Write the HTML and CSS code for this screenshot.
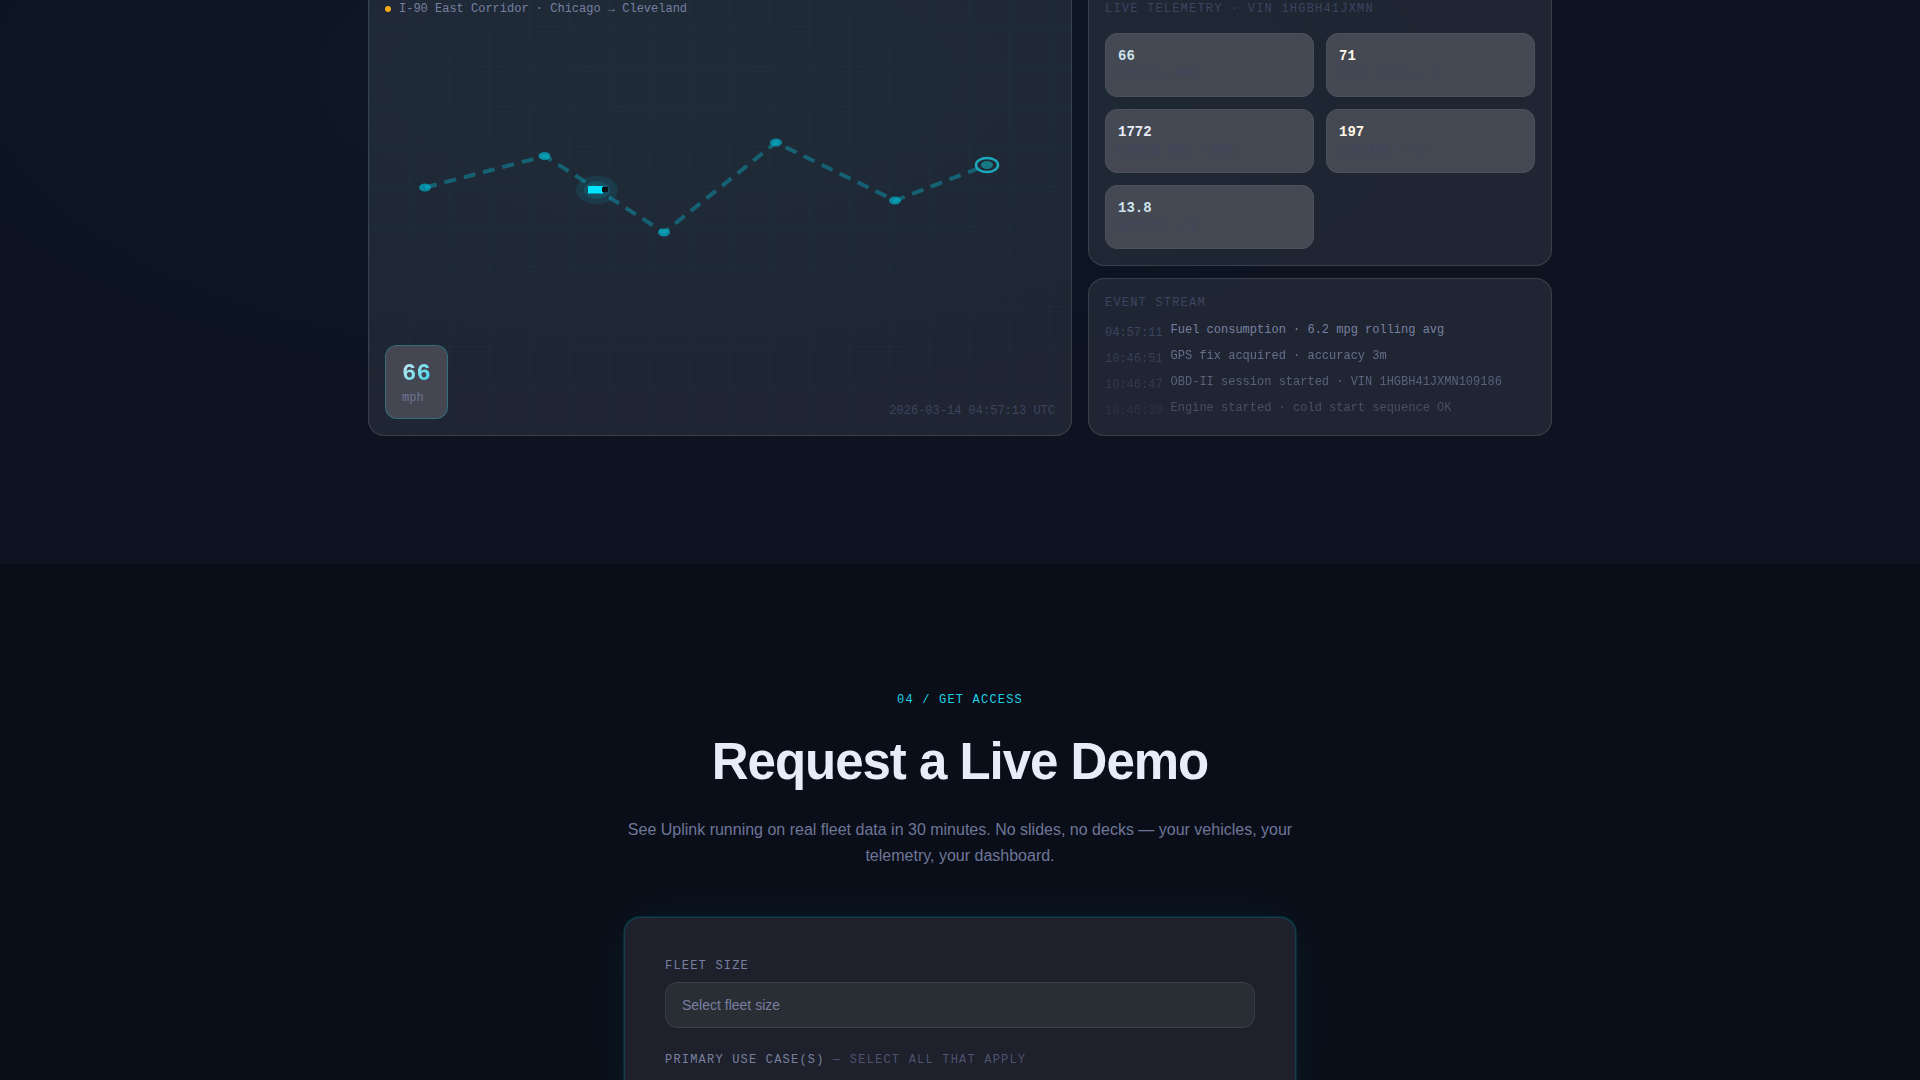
FILE: index.html
```
<!DOCTYPE html>
<html lang="en">
<head>
    <meta charset="UTF-8">
    <meta name="viewport" content="width=device-width, initial-scale=1.0">
    <title>Uplink - Live Fleet Telemetry</title>
    <link rel="stylesheet" href="styles.css">
</head>
<body>

    <section class="live">
        <div class="live-grid">
            <div class="map">
                <svg class="map-route" viewBox="0 0 702 435" preserveAspectRatio="none" aria-hidden="true">
                    <polyline points="56,187.5 176,156 295,232.5 407,142.5 526,200.5 618,165" fill="none" stroke="#00e5ff" stroke-opacity="0.3" stroke-width="4" stroke-dasharray="12 8"/>
                    <g fill="#00bcd4" fill-opacity="0.65">
                        <ellipse cx="56" cy="187.5" rx="6" ry="4"/>
                        <ellipse cx="175.5" cy="156" rx="6" ry="4"/>
                        <ellipse cx="295" cy="232.5" rx="6" ry="4"/>
                        <ellipse cx="407" cy="142.5" rx="6" ry="4"/>
                        <ellipse cx="526" cy="200.5" rx="6" ry="4"/>
                    </g>
                    <!-- destination -->
                    <ellipse cx="618" cy="165" rx="11" ry="7" fill="#212935" stroke="#1ba8bd" stroke-width="2.5"/>
                    <ellipse cx="618" cy="165" rx="6" ry="4" fill="#187986"/>
                    <!-- truck -->
                    <ellipse cx="228" cy="190" rx="21" ry="14" fill="#00e5ff" fill-opacity="0.1"/>
                    <ellipse cx="228" cy="190" rx="13" ry="9" fill="#00e5ff" fill-opacity="0.12"/>
                    <rect x="219" y="186" width="15" height="7.5" fill="#00e5ff"/>
                    <rect x="233" y="187" width="6" height="5" rx="1" fill="#060c14"/>
                </svg>
                <div class="map-header">
                    <span class="dot"></span>
                    <span>I-90 East Corridor · Chicago → Cleveland</span>
                </div>
                <div class="map-footer">
                    <div class="speed">
                        <div class="speed-value">66</div>
                        <div class="speed-unit">mph</div>
                    </div>
                    <time class="timestamp">2026-03-14 04:57:13 UTC</time>
                </div>
            </div>

            <div class="side">
                <div class="panel panel-telemetry">
                    <h3 class="panel-title">Live Telemetry · VIN 1HGBH41JXMN</h3>
                    <div class="metrics">
                        <div class="metric cyan">
                            <div class="metric-value">66</div>
                            <div class="metric-label">SPEED · MPH</div>
                        </div>
                        <div class="metric amber">
                            <div class="metric-value">71</div>
                            <div class="metric-label">FUEL LEVEL · %</div>
                        </div>
                        <div class="metric">
                            <div class="metric-value">1772</div>
                            <div class="metric-label">ENGINE RPM · RPM</div>
                        </div>
                        <div class="metric amber">
                            <div class="metric-value">197</div>
                            <div class="metric-label">COOLANT · °F</div>
                        </div>
                        <div class="metric cyan">
                            <div class="metric-value">13.8</div>
                            <div class="metric-label">BATTERY · V</div>
                        </div>
                    </div>
                </div>

                <div class="panel panel-events">
                    <h3 class="panel-title">Event Stream</h3>
                    <ul class="events">
                        <li><time>04:57:11</time><span>Fuel consumption · 6.2 mpg rolling avg</span></li>
                        <li><time>10:46:51</time><span>GPS fix acquired · accuracy 3m</span></li>
                        <li><time>10:46:47</time><span>OBD-II session started · VIN 1HGBH41JXMN109186</span></li>
                        <li><time>10:46:39</time><span>Engine started · cold start sequence OK</span></li>
                    </ul>
                </div>
            </div>
        </div>
    </section>

    <section class="demo">
        <p class="eyebrow">04 / GET ACCESS</p>
        <h2>Request a Live Demo</h2>
        <p class="lead">See Uplink running on real fleet data in 30 minutes. No slides, no decks — your vehicles, your telemetry, your dashboard.</p>

        <form class="demo-form">
            <div class="field">
                <label for="fleetSize">Fleet Size</label>
                <select id="fleetSize">
                    <option>Select fleet size</option>
                    <option>1-50 vehicles</option>
                    <option>51-250 vehicles</option>
                    <option>251+ vehicles</option>
                </select>
            </div>
            <fieldset class="field">
                <legend>Primary Use Case(s) <span class="hint">— select all that apply</span></legend>
            </fieldset>
        </form>
    </section>

</body>
</html>
```
FILE: styles.css
```
* {
    box-sizing: border-box;
    margin: 0;
    padding: 0;
}
body {
    height: 100vh;
    overflow: hidden;
    background: #0a0e18;
    color: #e8ecf8;
    font-family: "Liberation Sans", Arial, sans-serif;
}

/* live tracking */
.live {
    padding: 0 48px 128px;
    background: radial-gradient(ellipse 1000px 420px at 35% 80px, rgba(0, 200, 255, 0.035), transparent 80%), #0d1321;
}
.live-grid {
    display: grid;
    grid-template-columns: 44fr 29fr;
    gap: 16px;
    max-width: 1184px;
    margin: 0 auto;
    font-family: "Liberation Mono", "Courier New", monospace;
    font-size: 12px;
    line-height: 18px;
}
.map,
.panel {
    background-color: rgba(255, 255, 255, 0.08);
    border: 1px solid rgba(255, 255, 255, 0.12);
    border-radius: 16px;
}
.map {
    position: relative;
    display: flex;
    flex-direction: column;
    justify-content: space-between;
    padding: 0 16px 16px;
    border-top: none;
    border-radius: 0 0 16px 16px;
    background-image:
        linear-gradient(rgba(0, 229, 255, 0.03) 1px, transparent 1px),
        linear-gradient(90deg, rgba(0, 229, 255, 0.03) 1px, transparent 1px);
    background-size: 40px 40px;
    background-position: 0 26px;
}
.map-route {
    position: absolute;
    inset: 0;
    width: 100%;
    height: 100%;
}
.map-header {
    display: flex;
    align-items: center;
    gap: 8px;
    color: #7880a0;
}
.dot {
    width: 6px;
    height: 6px;
    border-radius: 50%;
    background: #f5ab18;
}
.map-footer {
    display: flex;
    justify-content: space-between;
    align-items: flex-end;
}
.speed {
    position: relative;
    padding: 12px 16px;
    background: #444752;
    border: 1px solid rgba(0, 229, 255, 0.25);
    border-radius: 12px;
}
.speed-value {
    font-size: 24px;
    font-weight: bold;
    line-height: 32px;
    color: transparent;
    background: linear-gradient(135deg, #d5eaf0, #22d3ee);
    -webkit-background-clip: text;
    background-clip: text;
}
.speed-unit {
    line-height: 16px;
    color: #6c7492;
}
.timestamp {
    line-height: 16px;
    color: #3d4460;
}

/* telemetry and events */
.side {
    display: flex;
    flex-direction: column;
    gap: 12px;
}
.panel {
    padding: 16px;
}
.panel-title {
    font-size: 12px;
    font-weight: normal;
    letter-spacing: 0.1em;
    text-transform: uppercase;
    color: #3d4460;
}
.panel-telemetry {
    padding-top: 0;
    border-top: none;
    border-radius: 0 0 16px 16px;
}
.panel-telemetry .panel-title {
    margin-bottom: 15px;
    line-height: 18px;
}
.metrics {
    display: grid;
    grid-template-columns: 1fr 1fr;
    gap: 12px;
}
.metric {
    padding: 12px;
    background: #444852;
    border: 1px solid #4d515b;
    border-radius: 12px;
}
.metric-value {
    font-size: 14px;
    font-weight: bold;
    line-height: 20px;
    color: #e8ecf8;
}
.metric-label {
    line-height: 18px;
    color: #3f465c;
}
.cyan .metric-value {
    color: #cbe3ea;
}
.amber .metric-value {
    color: #fff7e8;
}
.panel-events {
    padding-bottom: 15px;
}
.panel-events .panel-title {
    margin-bottom: 9px;
    line-height: 17px;
}
.events {
    display: flex;
    flex-direction: column;
    gap: 5px;
    list-style: none;
    color: #7880a0;
}
.events li {
    display: flex;
    align-items: flex-start;
    gap: 8px;
}
.events time {
    padding-top: 3px;
    color: #3d4460;
}
.events li:nth-child(2) {
    opacity: 0.8;
}
.events li:nth-child(3) {
    opacity: 0.65;
}
.events li:nth-child(4) {
    opacity: 0.45;
}

/* demo request */
.demo {
    display: flex;
    flex-direction: column;
    align-items: center;
    padding: 128px 48px;
    text-align: center;
}
.eyebrow {
    margin-bottom: 22px;
    font-family: "Liberation Mono", "Courier New", monospace;
    font-size: 12px;
    line-height: 16px;
    letter-spacing: 0.1em;
    color: #1fd0e4;
}
.demo h2 {
    margin-bottom: 23px;
    font-size: 51px;
    line-height: 64px;
    letter-spacing: -0.02em;
}
.lead {
    max-width: 672px;
    margin-bottom: 48px;
    font-size: 16px;
    line-height: 26px;
    color: #6e7698;
}
.demo-form {
    display: flex;
    flex-direction: column;
    gap: 24px;
    width: 100%;
    max-width: 672px;
    padding: 40px;
    text-align: left;
    background: #1e202b;
    border: 1px solid #173e49;
    border-radius: 16px;
    box-shadow: 0 0 60px rgba(0, 229, 255, 0.06), 0 0 2px rgba(0, 229, 255, 0.4);
}
.field {
    border: none;
}
.field label,
.field legend {
    display: block;
    margin-bottom: 8px;
    font-family: "Liberation Mono", "Courier New", monospace;
    font-size: 12px;
    line-height: 16px;
    letter-spacing: 0.1em;
    text-transform: uppercase;
    color: #7880a0;
}
.field .hint {
    color: #4d5370;
}
.field select {
    display: block;
    width: 100%;
    height: 46px;
    padding: 0 16px;
    font-family: inherit;
    font-size: 14px;
    color: #7880a0;
    background: #292d34;
    border: 1px solid #3b3e4a;
    border-radius: 12px;
    appearance: none;
}
```
